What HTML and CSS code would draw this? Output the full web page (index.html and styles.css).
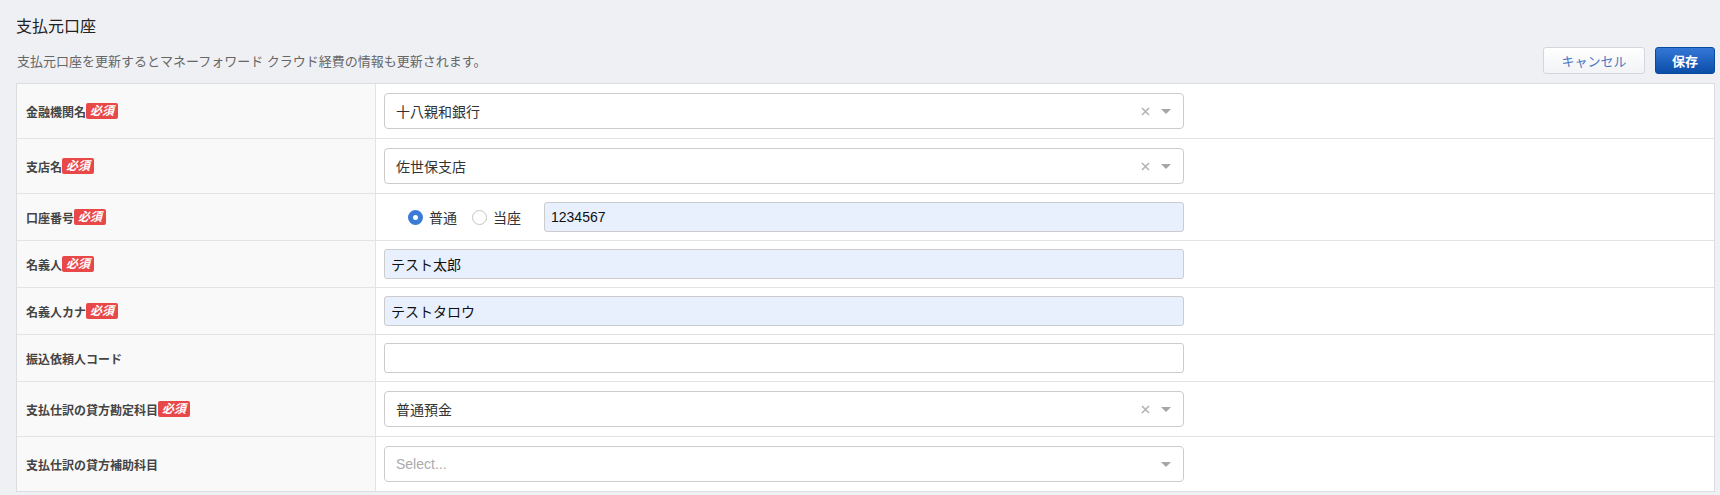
FILE: index.html
```html
<!DOCTYPE html>
<html lang="ja">
<head>
<meta charset="utf-8">
<title>支払元口座</title>
<link rel="stylesheet" href="styles.css">
</head>
<body>
<div class="page">
  <h1 class="title">支払元口座</h1>
  <div class="header">
    <p class="note">支払元口座を更新するとマネーフォワード クラウド経費の情報も更新されます。</p>
    <div class="actions">
      <button class="btn btn-cancel">キャンセル</button>
      <button class="btn btn-save">保存</button>
    </div>
  </div>
  <div class="form">
    <div class="row row-lg">
      <div class="label">金融機関名<span class="req">必須</span></div>
      <div class="value">
        <div class="select"><span class="sel-text">十八親和銀行</span><span class="clear"><svg width="9" height="9" viewBox="0 0 9 9"><path d="M1 1L8 8M8 1L1 8" stroke="#b3b3b3" stroke-width="1.6"/></svg></span><span class="arrow"></span></div>
      </div>
    </div>
    <div class="row row-lg">
      <div class="label">支店名<span class="req">必須</span></div>
      <div class="value">
        <div class="select"><span class="sel-text">佐世保支店</span><span class="clear"><svg width="9" height="9" viewBox="0 0 9 9"><path d="M1 1L8 8M8 1L1 8" stroke="#b3b3b3" stroke-width="1.6"/></svg></span><span class="arrow"></span></div>
      </div>
    </div>
    <div class="row row-sm">
      <div class="label">口座番号<span class="req">必須</span></div>
      <div class="value">
        <div class="account">
          <label class="radio"><span class="dot checked"></span>普通</label>
          <label class="radio"><span class="dot"></span>当座</label>
          <div class="input filled num">1234567</div>
        </div>
      </div>
    </div>
    <div class="row row-sm">
      <div class="label">名義人<span class="req">必須</span></div>
      <div class="value"><div class="input filled wide">テスト太郎</div></div>
    </div>
    <div class="row row-sm">
      <div class="label">名義人カナ<span class="req">必須</span></div>
      <div class="value"><div class="input filled wide">テストタロウ</div></div>
    </div>
    <div class="row row-sm">
      <div class="label">振込依頼人コード</div>
      <div class="value"><div class="input wide"></div></div>
    </div>
    <div class="row row-lg">
      <div class="label">支払仕訳の貸方勘定科目<span class="req">必須</span></div>
      <div class="value">
        <div class="select"><span class="sel-text">普通預金</span><span class="clear"><svg width="9" height="9" viewBox="0 0 9 9"><path d="M1 1L8 8M8 1L1 8" stroke="#b3b3b3" stroke-width="1.6"/></svg></span><span class="arrow"></span></div>
      </div>
    </div>
    <div class="row row-lg last">
      <div class="label">支払仕訳の貸方補助科目</div>
      <div class="value">
        <div class="select"><span class="sel-text placeholder">Select...</span><span class="arrow"></span></div>
      </div>
    </div>
  </div>
</div>
</body>
</html>
```
FILE: styles.css
```css
* { box-sizing: border-box; }
html, body {
  margin: 0;
  padding: 0;
  background: #eff0f4;
  font-family: "Liberation Sans", "Noto Sans CJK JP", sans-serif;
  color: #333;
}
.page {
  padding: 17px 5px 0 16px;
}
.title {
  margin: 0;
  font-size: 16px;
  line-height: 20px;
  font-weight: 400;
  color: #222;
}
.header {
  margin-top: 10px;
  display: flex;
  align-items: center;
  justify-content: space-between;
  height: 27px;
}
.note {
  margin: 0;
  font-size: 13px;
  color: #666;
  padding-left: 1px;
}
.actions {
  display: flex;
  gap: 10px;
}
.btn {
  height: 27px;
  font-family: "Liberation Sans", "Noto Sans CJK JP", sans-serif;
  font-size: 13px;
  border-radius: 3px;
  padding: 0;
  cursor: pointer;
}
.btn-cancel {
  width: 102px;
  color: #4a78c2;
  background: linear-gradient(#ffffff, #f2f3f6);
  border: 1px solid #d3d6dc;
}
.btn-save {
  width: 60px;
  color: #fff;
  font-weight: bold;
  background: linear-gradient(#3577d6, #0a4ea8);
  border: 1px solid #0a4a9e;
}
.form {
  margin-top: 9px;
  border: 1px solid #dcdde0;
  background: #fff;
}
.row {
  display: grid;
  grid-template-columns: 359px 1fr;
  border-bottom: 1px solid #e2e3e5;
}
.row.last { border-bottom: none; }
.label {
  background: #f9f9f9;
  border-right: 1px solid #e2e3e5;
  display: flex;
  align-items: center;
  padding-left: 9px;
  font-size: 12px;
  font-weight: bold;
  color: #444;
}
.req {
  display: inline-block;
  background: #e84848;
  color: #fff;
  font-style: italic;
  font-weight: bold;
  font-size: 12px;
  line-height: 16px;
  height: 16px;
  padding: 0 4px;
  border-radius: 2px;
}
.value {
  padding-left: 8px;
  display: flex;
  align-items: center;
}
.row-lg .value { padding-top: 9px; padding-bottom: 9px; }
.row-sm .value { padding-top: 8px; padding-bottom: 8px; }
.select {
  width: 800px;
  height: 36px;
  border: 1px solid #cccccc;
  border-radius: 4px;
  background: #fff;
  display: flex;
  align-items: center;
  padding-left: 11px;
  padding-right: 12px;
  font-size: 14px;
}
.sel-text { flex: 1; color: #333; }
.placeholder { color: #aaa; }
.clear {
  width: 9px;
  height: 9px;
  display: flex;
  margin-right: 11px;
}
.arrow {
  width: 0;
  height: 0;
  border-left: 5px solid transparent;
  border-right: 5px solid transparent;
  border-top: 5px solid #a6a6a6;
}
.input {
  height: 30px;
  border: 1px solid #cccccc;
  border-radius: 3px;
  background: #fff;
  display: flex;
  align-items: center;
  padding-left: 6px;
  font-size: 14px;
  color: #111;
}
.input.filled { background: #e8f0fe; }
.input.wide { width: 800px; }
.account {
  width: 800px;
  display: flex;
  align-items: center;
  padding-left: 24px;
}
.radio {
  display: flex;
  align-items: center;
  gap: 6px;
  font-size: 14px;
  color: #333;
  margin-right: 15px;
}
.radio + .radio { margin-right: 23px; }
.dot {
  width: 15px;
  height: 15px;
  border-radius: 50%;
  border: 1px solid #c4c4c4;
  background: #fff;
}
.dot.checked {
  border: 5px solid #3a7bd5;
  background: #fff;
}
.num {
  flex: 1;
  font-size: 14px;
}
```
